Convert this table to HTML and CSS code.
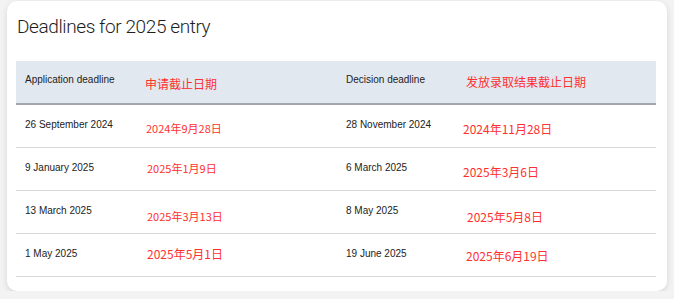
FILE: index.html
```html
<!DOCTYPE html>
<html lang="en">
<head>
<meta charset="utf-8">
<title>Deadlines for 2025 entry</title>
<link rel="stylesheet" href="styles.css">
</head>
<body>
<div class="card">
  <h2 class="title">Deadlines for 2025 entry</h2>
  <div class="table">
    <div class="row head">
      <div class="en">Application deadline</div>
      <div class="zh t15">申请截止日期</div>
      <div class="en">Decision deadline</div>
      <div class="zh t13 l4">发放录取结果截止日期</div>
    </div>
    <div class="row">
      <div class="en">26 September 2024</div>
      <div class="zh sm t15 l1">2024年9月28日</div>
      <div class="en">28 November 2024</div>
      <div class="zh t16 l1">2024年11月28日</div>
    </div>
    <div class="row">
      <div class="en">9 January 2025</div>
      <div class="zh sm t12 l2">2025年1月9日</div>
      <div class="en">6 March 2025</div>
      <div class="zh t16 l1">2025年3月6日</div>
    </div>
    <div class="row">
      <div class="en">13 March 2025</div>
      <div class="zh sm t17 l2">2025年3月13日</div>
      <div class="en">8 May 2025</div>
      <div class="zh t18 l5">2025年5月8日</div>
    </div>
    <div class="row">
      <div class="en">1 May 2025</div>
      <div class="zh t12 l2">2025年5月1日</div>
      <div class="en">19 June 2025</div>
      <div class="zh t14 l4">2025年6月19日</div>
    </div>
  </div>
</div>
</body>
</html>
```

FILE: styles.css
```css
html, body {
  margin: 0;
  padding: 0;
}
body {
  background: #f3f3f3;
  font-family: "Liberation Sans", Arial, sans-serif;
  color: #222;
}
.card {
  box-sizing: border-box;
  width: 660px;
  height: 290px;
  margin: 1px 0 0 7px;
  padding: 0 11px 0 9px;
  background: #fff;
  border-radius: 10px;
  box-shadow: 0 2px 6px rgba(0, 0, 0, 0.12);
}
.title {
  margin: 0;
  padding: 14px 0 0 1px;
  height: 60px;
  box-sizing: border-box;
  font-family: Roboto, "Liberation Sans", sans-serif;
  font-size: 19px;
  font-weight: 300;
  line-height: 24px;
  letter-spacing: -0.4px;
  color: #1e1e1e;
}
.table {
  display: flex;
  flex-direction: column;
}
.row {
  display: grid;
  grid-template-columns: 129px 192px 125px 194px;
  height: 43px;
  box-sizing: border-box;
  border-bottom: 1px solid #d8d8d8;
}
.row.head {
  height: 44px;
  background: #e2e8ef;
  border-bottom: 2px solid #a3a6aa;
}
.en {
  padding: 13px 0 0 9px;
  font-size: 10px;
  line-height: 12px;
  color: #222;
}
.row:not(.head) .en {
  padding-top: 14px;
}
.zh {
  font-family: "Noto Sans CJK SC", "Liberation Sans", sans-serif;
  font-size: 12px;
  line-height: 16px;
  color: #ff3030;
  white-space: nowrap;
}
.zh.sm { font-size: 11px; }
.t12 { padding-top: 12px; }
.t13 { padding-top: 13px; }
.t14 { padding-top: 14px; }
.t15 { padding-top: 15px; }
.t16 { padding-top: 16px; }
.t17 { padding-top: 17px; }
.t18 { padding-top: 18px; }
.l1 { padding-left: 1px; }
.l2 { padding-left: 2px; }
.l4 { padding-left: 4px; }
.l5 { padding-left: 5px; }
```
